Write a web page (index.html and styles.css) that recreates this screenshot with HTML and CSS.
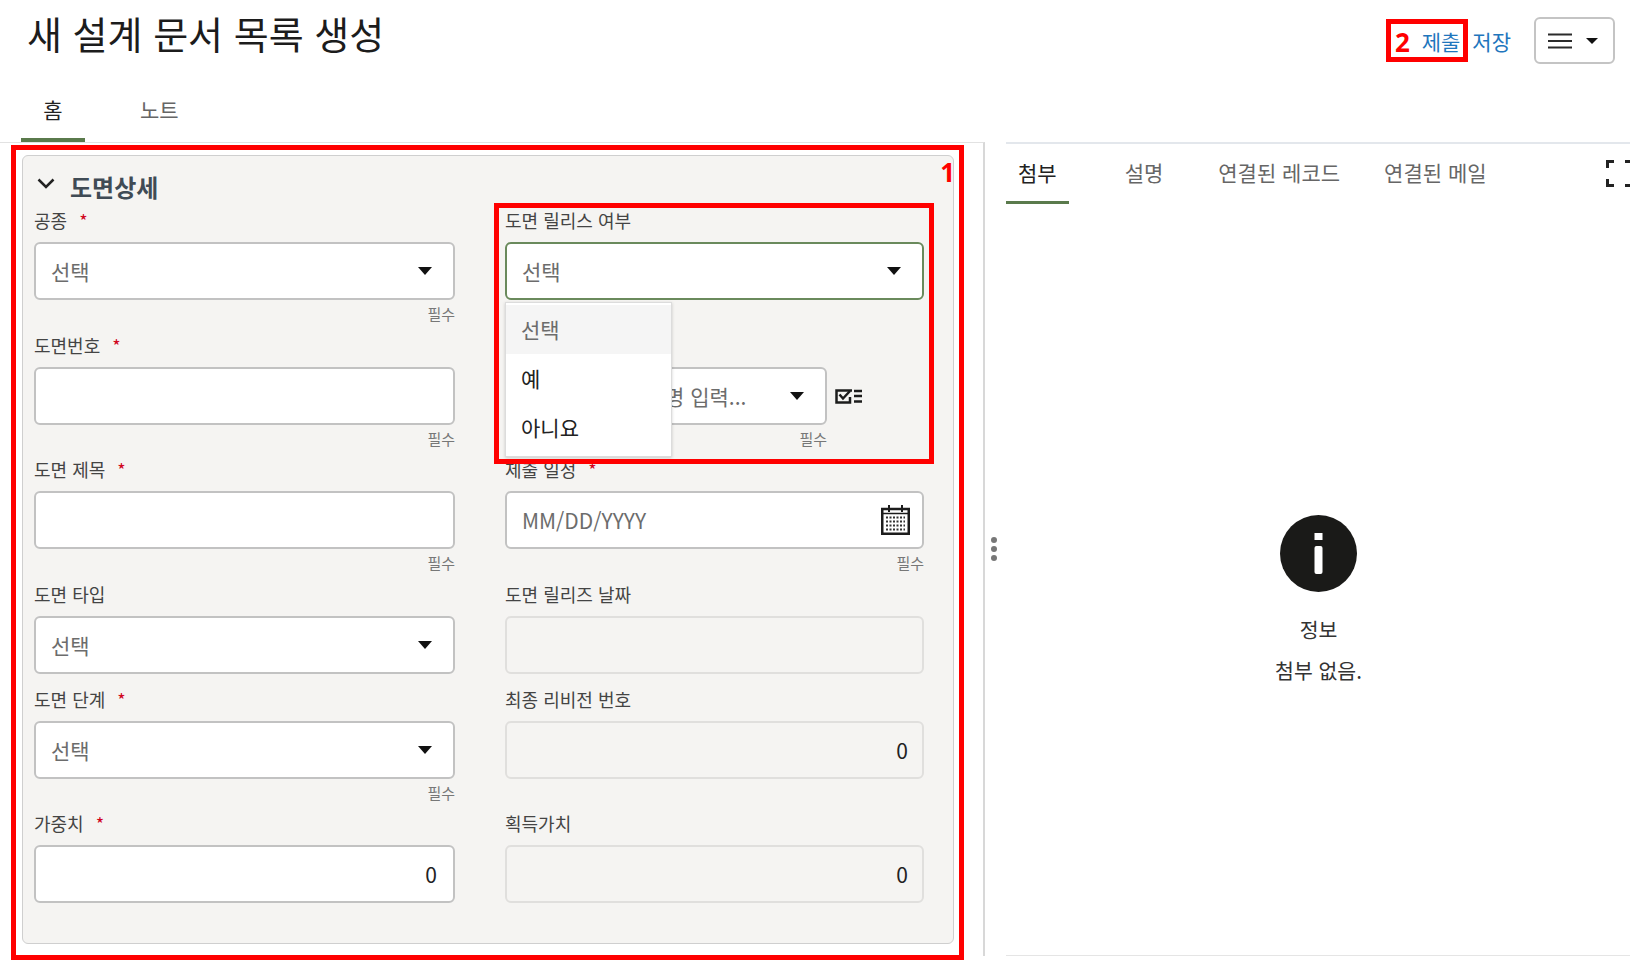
FILE: index.html
```html
<!DOCTYPE html>
<html lang="ko">
<head>
    <meta charset="UTF-8">
    <title>새 설계 문서 목록 생성</title>
    <link rel="stylesheet" href="styles.css">
</head>
<body>
    <header class="top-bar">
        <h1>새 설계 문서 목록 생성</h1>
        <div class="top-actions">
            <a class="link-btn">제출</a>
            <a class="link-btn">저장</a>
            <button class="menu-btn" type="button">
                <svg width="24" height="16" viewBox="0 0 24 16"><path d="M0 1.5h24M0 8h24M0 14.5h24" stroke="#2b2b2b" stroke-width="2"/></svg>
                <span class="caret caret-small"></span>
            </button>
        </div>
    </header>

    <nav class="main-tabs">
        <a class="tab active">홈</a>
        <a class="tab">노트</a>
    </nav>

    <main class="split">
        <div class="left-pane">
            <section class="panel">
                <div class="panel-head">
                    <svg width="18" height="12" viewBox="0 0 18 12"><path d="M1.5 1.5L9 9l7.500-7.500" fill="none" stroke="#222" stroke-width="2.500"/></svg>
                    <h2>도면상세</h2>
                </div>
                <div class="form-grid">
                    <div class="field">
                        <label>공종 <span class="required">*</span></label>
                        <div class="control"><span class="ph">선택</span><span class="caret"></span></div>
                        <div class="helper">필수</div>
                    </div>
                    <div class="field">
                        <label>도면 릴리스 여부</label>
                        <div class="control focused"><span class="ph">선택</span><span class="caret"></span></div>
                        <ul class="dropdown">
                            <li class="hover">선택</li>
                            <li>예</li>
                            <li>아니요</li>
                        </ul>
                    </div>
                    <div class="field">
                        <label>도면번호 <span class="required">*</span></label>
                        <div class="control"></div>
                        <div class="helper">필수</div>
                    </div>
                    <div class="field">
                        <label>&nbsp;</label>
                        <div class="control-row">
                            <div class="control"><span class="ph ph-covered">명 입력...</span><span class="caret"></span></div>
                            <svg class="list-icon" width="27" height="16" viewBox="0 0 27 16"><path d="M17 2.500H1.500v12H15V9" fill="none" stroke="#1c1c1c" stroke-width="2.500"/><path d="M4.500 6.500L8 10.500 15 3" fill="none" stroke="#1c1c1c" stroke-width="2.500"/><path d="M19 3h8M19 8h8M19 13.500h8" stroke="#1c1c1c" stroke-width="2.500"/></svg>
                        </div>
                        <div class="helper helper-short">필수</div>
                    </div>
                    <div class="field">
                        <label>도면 제목 <span class="required">*</span></label>
                        <div class="control"></div>
                        <div class="helper">필수</div>
                    </div>
                    <div class="field">
                        <label>제출 일정 <span class="required">*</span></label>
                        <div class="control date">
                            <span class="ph">MM/DD/YYYY</span>
                            <svg width="29" height="30" viewBox="0 0 29 30">
                                <path d="M1.250 4h26.500v24.750H1.250z" fill="none" stroke="#1c1c1c" stroke-width="2.500"/>
                                <path d="M1 8.500h27" stroke="#1c1c1c" stroke-width="1.500"/>
                                <path d="M8 0v7M21 0v7" stroke="#1c1c1c" stroke-width="2"/>
                                <path d="M5 12.500h19M5 16.500h19M5 20.500h19M5 24.500h19" stroke="#333" stroke-width="2" stroke-dasharray="2 1.500"/>
                            </svg>
                        </div>
                        <div class="helper">필수</div>
                    </div>
                    <div class="field">
                        <label>도면 타입</label>
                        <div class="control"><span class="ph">선택</span><span class="caret"></span></div>
                    </div>
                    <div class="field">
                        <label>도면 릴리즈 날짜</label>
                        <div class="control disabled"></div>
                    </div>
                    <div class="field">
                        <label>도면 단계 <span class="required">*</span></label>
                        <div class="control"><span class="ph">선택</span><span class="caret"></span></div>
                        <div class="helper">필수</div>
                    </div>
                    <div class="field">
                        <label>최종 리비전 번호</label>
                        <div class="control disabled number">0</div>
                    </div>
                    <div class="field">
                        <label>가중치 <span class="required">*</span></label>
                        <div class="control number">0</div>
                    </div>
                    <div class="field">
                        <label>획득가치</label>
                        <div class="control disabled number">0</div>
                    </div>
                </div>
            </section>
        </div>

        <div class="splitter"><i></i><i></i><i></i></div>

        <div class="right-pane">
            <nav class="side-tabs">
                <a class="tab active">첨부</a>
                <a class="tab">설명</a>
                <a class="tab">연결된 레코드</a>
                <a class="tab">연결된 메일</a>
                <svg class="expand-icon" width="27" height="27" viewBox="0 0 27 27"><path d="M8 1.500H1.500V8M19 1.500h6.500V8M8 25.500H1.500V19M19 25.500h6.500V19" fill="none" stroke="#222" stroke-width="3"/></svg>
            </nav>
            <div class="empty-state">
                <svg width="77" height="77" viewBox="0 0 77 77">
                    <circle cx="38.500" cy="38.500" r="38.500" fill="#1a1a18"/>
                    <rect x="34.500" y="18" width="8" height="7" fill="#fff"/>
                    <rect x="34.500" y="31" width="8" height="28" rx="2" fill="#fff"/>
                </svg>
                <div class="empty-title">정보</div>
                <div class="empty-text">첨부 없음.</div>
            </div>
        </div>
    </main>

    <!-- 주석 표시 -->
    <div class="mark mark-1"><b>1</b></div>
    <div class="mark mark-2"><b>2</b></div>
    <div class="mark mark-3"></div>
</body>
</html>
```

FILE: styles.css
```css
* {
    box-sizing: border-box;
}
html, body {
    margin: 0;
    height: 968px;
    overflow: hidden;
}
body {
    position: relative;
    background: #fff;
    color: #222;
    font-family: "Noto Sans CJK KR", "Noto Sans", sans-serif;
    display: flex;
    flex-direction: column;
}
.top-bar {
    height: 83px;
    display: flex;
    justify-content: space-between;
    padding: 0 22px 0 27px;
}
.top-bar h1 {
    margin: 8px 0 0;
    font-size: 38px;
    line-height: 50px;
    font-weight: 400;
    color: #1c1c1c;
}
.top-actions {
    display: flex;
    align-items: flex-start;
    padding-top: 17px;
}
.link-btn {
    color: #1f76bd;
    font-size: 21px;
    line-height: 48px;
    margin-right: 12px;
}
.link-btn + .link-btn {
    margin-right: 23px;
}
.menu-btn {
    width: 81px;
    height: 47px;
    padding: 0 15px 0 12px;
    background: #fff;
    border: 2px solid #c4c4c4;
    border-radius: 6px;
    display: flex;
    align-items: center;
    justify-content: space-between;
}
.caret {
    display: block;
    width: 0;
    height: 0;
    border-left: 7px solid transparent;
    border-right: 7px solid transparent;
    border-top: 8px solid #111;
}
.caret-small {
    border-left-width: 6px;
    border-right-width: 6px;
    border-top-width: 6px;
}
.main-tabs {
    height: 59px;
    display: flex;
    padding-left: 21px;
}
.tab {
    display: block;
    padding: 0 12px;
    font-size: 21px;
    color: #666;
    text-align: center;
    border-bottom: 4px solid transparent;
}
.tab.active {
    color: #222;
    border-bottom-color: #5a7a4c;
}
.main-tabs .tab {
    line-height: 40px;
    padding-top: 6px;
}
.main-tabs .tab.active {
    width: 64px;
}
.main-tabs .tab + .tab {
    margin-left: 43px;
}
.split {
    height: 814px;
    display: flex;
}
.left-pane {
    width: 985px;
    padding: 12px 29px 0 22px;
    border-top: 1px solid #e2e2e2;
    border-right: 2px solid #d8d8d8;
}
.panel {
    height: 789px;
    background: #f5f4f2;
    border: 1px solid #cfcfcf;
    border-radius: 6px;
    padding: 0 30px 0 11px;
}
.panel-head {
    height: 53px;
    padding: 13px 0 0 3px;
    display: flex;
}
.panel-head svg {
    margin-top: 9px;
}
.panel-head h2 {
    margin: 0 0 0 15px;
    font-size: 24px;
    line-height: 36px;
    font-weight: 700;
    color: #404b55;
}
.form-grid {
    display: grid;
    grid-template-columns: 421px 419px;
    column-gap: 50px;
    row-gap: 14px;
}
.field {
    position: relative;
}
.field label {
    display: block;
    height: 33px;
    font-size: 18px;
    line-height: 22px;
    color: #444;
}
.required {
    color: #d0021b;
    margin-left: 7px;
}
.control {
    height: 58px;
    padding: 0 21px 0 15px;
    background: #fff;
    border: 2px solid #c2c2c2;
    border-radius: 6px;
    display: flex;
    align-items: center;
    justify-content: space-between;
    font-size: 21px;
    color: #222;
}
.control.focused {
    border-color: #6a8a5c;
}
.control.disabled {
    background: #f5f4f2;
    border-color: #e0dfdd;
}
.control.date {
    padding-right: 12px;
}
.control.number {
    justify-content: flex-end;
    padding-right: 16px;
}
.control.disabled.number {
    padding-right: 14px;
}
.ph {
    color: #6c6c6c;
    white-space: nowrap;
}
.ph-covered {
    margin-left: 143px;
}
.control-row {
    display: flex;
    align-items: center;
    width: 357px;
}
.control-row .control {
    width: 322px;
    flex: none;
    overflow: hidden;
}
.list-icon {
    flex: none;
    margin-left: 8px;
}
.helper {
    height: 19.500px;
    font-size: 15px;
    line-height: 28px;
    text-align: right;
    color: #777;
}
.helper-short {
    width: 322px;
}
.dropdown {
    position: absolute;
    z-index: 2;
    top: 93px;
    left: 0;
    width: 167px;
    height: 155px;
    margin: 0;
    padding: 2px 0 0;
    list-style: none;
    background: #fff;
    border: 1px solid #dcdcdc;
    box-shadow: 0 1px 3px rgba(0, 0, 0, 0.18);
    font-size: 21px;
    color: #222;
}
.dropdown li {
    height: 49px;
    line-height: 49px;
    padding-left: 15px;
}
.dropdown li.hover {
    background: #f5f5f5;
    color: #6c6c6c;
}
.splitter {
    width: 21px;
    display: flex;
    flex-direction: column;
    align-items: center;
    justify-content: center;
    gap: 3px;
    padding-right: 3px;
}
.splitter i {
    width: 6px;
    height: 6px;
    border-radius: 50%;
    background: #777;
}
.right-pane {
    flex: 1;
    margin-right: 7px;
    overflow: hidden;
    border-top: 2px solid #e3e7ec;
    border-bottom: 1px solid #e5e5e5;
    display: flex;
    flex-direction: column;
}
.side-tabs {
    height: 60px;
    display: flex;
}
.side-tabs .tab {
    line-height: 56px;
    height: 60px;
    border-bottom-width: 3px;
}
.side-tabs .tab:nth-child(2) {
    margin-left: 44px;
}
.side-tabs .tab:nth-child(3) {
    margin-left: 31px;
}
.side-tabs .tab:nth-child(4) {
    margin-left: 20px;
}
.expand-icon {
    flex: none;
    margin: 16px -3px 0 auto;
}
.empty-state {
    flex: 1;
    display: flex;
    flex-direction: column;
    align-items: center;
    padding: 311px 0 0 1px;
    color: #333;
    font-size: 20.500px;
}
.empty-title {
    margin-top: 22px;
    line-height: 30px;
}
.empty-text {
    margin-top: 11px;
    line-height: 30px;
}
.mark {
    position: absolute;
    z-index: 5;
    border: 5px solid #f00;
    color: #f00;
    font-family: "Open Sans", "Noto Sans", sans-serif;
}
.mark b {
    position: absolute;
    font-size: 26px;
    line-height: 30px;
}
.mark-1 {
    left: 11px;
    top: 145px;
    width: 953px;
    height: 815px;
}
.mark-1 b {
    right: 4px;
    top: 7px;
}
.mark-2 {
    left: 1386px;
    top: 19px;
    width: 82px;
    height: 43px;
}
.mark-2 b {
    left: 4px;
    top: 3px;
}
.mark-3 {
    left: 494px;
    top: 203px;
    width: 440px;
    height: 261px;
}
```
